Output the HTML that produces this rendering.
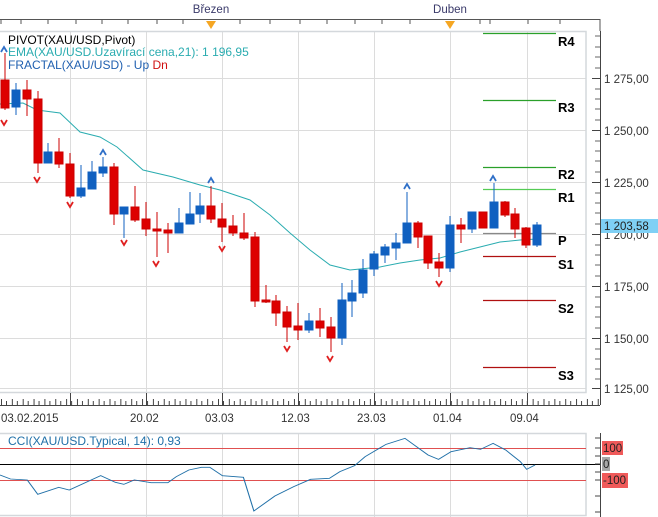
<!DOCTYPE html>
<html><head><meta charset="utf-8"><style>
html,body{margin:0;padding:0;background:#fff;width:658px;height:517px;overflow:hidden}
svg{display:block}
text{font-family:"Liberation Sans",sans-serif}
</style></head><body>
<svg width="658" height="517" viewBox="0 0 658 517" xmlns="http://www.w3.org/2000/svg">
<!-- top axis -->
<text x="211" y="13" font-size="11.5" fill="#3a3a6a" text-anchor="middle">Březen</text>
<text x="450" y="13" font-size="11.5" fill="#3a3a6a" text-anchor="middle">Duben</text>
<line x1="0" y1="19.5" x2="600" y2="19.5" stroke="#555"/>
<g stroke="#555">
<line x1="1" y1="19" x2="1" y2="24"/><line x1="21" y1="19" x2="21" y2="24"/><line x1="48" y1="19" x2="48" y2="24"/><line x1="76" y1="19" x2="76" y2="24"/><line x1="102" y1="19" x2="102" y2="24"/><line x1="128" y1="19" x2="128" y2="24"/><line x1="157" y1="19" x2="157" y2="24"/><line x1="183" y1="19" x2="183" y2="24"/><line x1="240" y1="19" x2="240" y2="24"/><line x1="270" y1="19" x2="270" y2="24"/><line x1="300" y1="19" x2="300" y2="24"/><line x1="327" y1="19" x2="327" y2="24"/><line x1="355" y1="19" x2="355" y2="24"/><line x1="382" y1="19" x2="382" y2="24"/><line x1="410" y1="19" x2="410" y2="24"/><line x1="480" y1="19" x2="480" y2="24"/><line x1="490" y1="19" x2="490" y2="24"/><line x1="528" y1="19" x2="528" y2="24"/><line x1="560" y1="19" x2="560" y2="24"/><line x1="600" y1="19" x2="600" y2="31"/>
</g>
<polygon points="206,21 216,21 211,29" fill="#f5a623"/>
<polygon points="445,21 455,21 450,29" fill="#f5a623"/>
<!-- grid -->
<g stroke="#dcdcdc">
<line x1="0" y1="78.5" x2="586" y2="78.5"/><line x1="0" y1="130.5" x2="586" y2="130.5"/><line x1="0" y1="182.5" x2="586" y2="182.5"/><line x1="0" y1="234.5" x2="586" y2="234.5"/><line x1="0" y1="286.5" x2="586" y2="286.5"/><line x1="0" y1="338.5" x2="586" y2="338.5"/><line x1="0" y1="388.5" x2="586" y2="388.5"/>
<line x1="70.5" y1="31" x2="70.5" y2="392"/><line x1="146.5" y1="31" x2="146.5" y2="392"/><line x1="222.5" y1="31" x2="222.5" y2="392"/><line x1="298.5" y1="31" x2="298.5" y2="392"/><line x1="374.5" y1="31" x2="374.5" y2="392"/><line x1="450.5" y1="31" x2="450.5" y2="392"/><line x1="527.5" y1="31" x2="527.5" y2="392"/>
</g>
<rect x="-1" y="31.5" width="587" height="361" fill="none" stroke="#d4d8dc" stroke-width="1.5"/>
<!-- pivot lines -->
<g stroke-width="1.3">
<line x1="483" y1="33.5" x2="556" y2="33.5" stroke="#2aa02a"/>
<line x1="483" y1="100.5" x2="556" y2="100.5" stroke="#2aa02a"/>
<line x1="483" y1="167.5" x2="556" y2="167.5" stroke="#2aa02a"/>
<line x1="483" y1="189.5" x2="556" y2="189.5" stroke="#55cc55"/>
<line x1="483" y1="233.5" x2="556" y2="233.5" stroke="#888"/>
<line x1="483" y1="256.5" x2="556" y2="256.5" stroke="#b01010"/>
<line x1="483" y1="300.5" x2="556" y2="300.5" stroke="#b01010"/>
<line x1="483" y1="367.5" x2="556" y2="367.5" stroke="#b01010"/>
</g>
<g font-size="13" fill="#000" font-weight="bold">
<text x="558" y="46">R4</text><text x="558" y="112">R3</text><text x="558" y="179">R2</text><text x="558" y="202">R1</text><text x="558" y="245">P</text><text x="558" y="269">S1</text><text x="558" y="313">S2</text><text x="558" y="380">S3</text>
</g>
<!-- EMA -->
<polyline fill="none" stroke="#2aacb0" stroke-width="1" points="0,104 23,103 37,110 60,113 80,132 100,137 117,147 143,170 173,177 200,185 220,190 250,200 270,215 290,233 310,250 330,265 350,270 380,267 400,263 420,260 440,258 460,252 480,247 500,242 520,240 537,239"/>
<!-- candles -->
<g stroke-width="1">
<g stroke="#cc0000" fill="#dd0000">
<line x1="5" y1="53" x2="5" y2="110"/><rect x="1" y="80" width="8" height="28"/>
<line x1="27" y1="80" x2="27" y2="116"/><rect x="23" y="90" width="8" height="9"/>
<line x1="38" y1="91" x2="38" y2="173"/><rect x="34" y="99" width="8" height="64"/>
<line x1="59" y1="138" x2="59" y2="168"/><rect x="55" y="152" width="8" height="12"/>
<line x1="70" y1="153" x2="70" y2="198"/><rect x="66" y="164" width="8" height="32"/>
<line x1="114" y1="163" x2="114" y2="225"/><rect x="110" y="167" width="8" height="47"/>
<line x1="135" y1="186" x2="135" y2="222"/><rect x="131" y="207" width="8" height="13"/>
<line x1="146" y1="202" x2="146" y2="236"/><rect x="142" y="219" width="8" height="10"/>
<line x1="157" y1="212" x2="157" y2="257"/><rect x="153" y="229" width="8" height="2"/>
<line x1="168" y1="223" x2="168" y2="253"/><rect x="164" y="230" width="8" height="3"/>
<line x1="211" y1="186" x2="211" y2="223"/><rect x="207" y="206" width="8" height="13"/>
<line x1="222" y1="203" x2="222" y2="242"/><rect x="218" y="219" width="8" height="8"/>
<line x1="233" y1="215" x2="233" y2="236"/><rect x="229" y="226" width="8" height="7"/>
<line x1="244" y1="213" x2="244" y2="240"/><rect x="240" y="233" width="8" height="5"/>
<line x1="255" y1="232" x2="255" y2="307"/><rect x="251" y="237" width="8" height="64"/>
<line x1="266" y1="285" x2="266" y2="303"/><rect x="262" y="300" width="8" height="2"/>
<line x1="276" y1="295" x2="276" y2="326"/><rect x="272" y="301" width="8" height="12"/>
<line x1="287" y1="306" x2="287" y2="342"/><rect x="283" y="312" width="8" height="15"/>
<line x1="298" y1="303" x2="298" y2="340"/><rect x="294" y="326" width="8" height="4"/>
<line x1="320" y1="308" x2="320" y2="337"/><rect x="316" y="321" width="8" height="7"/>
<line x1="331" y1="317" x2="331" y2="352"/><rect x="327" y="327" width="8" height="11"/>
<line x1="418" y1="221" x2="418" y2="248"/><rect x="414" y="223" width="8" height="14"/>
<line x1="428" y1="236" x2="428" y2="269"/><rect x="424" y="236" width="8" height="27"/>
<line x1="439" y1="253" x2="439" y2="277"/><rect x="435" y="262" width="8" height="6"/>
<line x1="461" y1="218" x2="461" y2="243"/><rect x="457" y="225" width="8" height="4"/>
<rect x="479" y="212" width="8" height="16"/>
<line x1="505" y1="201" x2="505" y2="217"/><rect x="501" y="202" width="8" height="13"/>
<line x1="515" y1="208" x2="515" y2="238"/><rect x="511" y="214" width="8" height="15"/>
<line x1="526" y1="227" x2="526" y2="248"/><rect x="522" y="228" width="8" height="17"/>
</g>
<g stroke="#1060c0" fill="#1060c0">
<line x1="16" y1="83" x2="16" y2="115"/><rect x="12" y="90" width="8" height="17"/>
<line x1="48" y1="143" x2="48" y2="163"/><rect x="44" y="152" width="8" height="11"/>
<line x1="81" y1="165" x2="81" y2="198"/><rect x="77" y="188" width="8" height="8"/>
<line x1="92" y1="161" x2="92" y2="189"/><rect x="88" y="172" width="8" height="17"/>
<line x1="103" y1="157" x2="103" y2="177"/><rect x="99" y="167" width="8" height="6"/>
<line x1="124" y1="207" x2="124" y2="238"/><rect x="120" y="207" width="8" height="7"/>
<line x1="179" y1="208" x2="179" y2="233"/><rect x="175" y="223" width="8" height="10"/>
<line x1="190" y1="192" x2="190" y2="224"/><rect x="186" y="214" width="8" height="10"/>
<line x1="200" y1="193" x2="200" y2="223"/><rect x="196" y="206" width="8" height="8"/>
<line x1="309" y1="313" x2="309" y2="333"/><rect x="305" y="321" width="8" height="9"/>
<line x1="342" y1="283" x2="342" y2="345"/><rect x="338" y="300" width="8" height="38"/>
<line x1="352" y1="280" x2="352" y2="317"/><rect x="348" y="293" width="8" height="8"/>
<line x1="363" y1="259" x2="363" y2="298"/><rect x="359" y="270" width="8" height="23"/>
<line x1="374" y1="251" x2="374" y2="276"/><rect x="370" y="254" width="8" height="15"/>
<line x1="385" y1="244" x2="385" y2="263"/><rect x="381" y="247" width="8" height="8"/>
<line x1="396" y1="233" x2="396" y2="260"/><rect x="392" y="243" width="8" height="5"/>
<line x1="407" y1="192" x2="407" y2="243"/><rect x="403" y="223" width="8" height="20"/>
<line x1="450" y1="216" x2="450" y2="272"/><rect x="446" y="225" width="8" height="43"/>
<line x1="472" y1="212" x2="472" y2="233"/><rect x="468" y="212" width="8" height="17"/>
<line x1="494" y1="183" x2="494" y2="228"/><rect x="490" y="202" width="8" height="26"/>
<line x1="537" y1="222" x2="537" y2="247"/><rect x="533" y="225" width="8" height="20"/>
</g>
</g>
<!-- fractals up -->
<g fill="none" stroke="#3070c8" stroke-width="1.8">
<polyline points="1,52 4,47 7,52"/><polyline points="100,155 103,150 106,155"/><polyline points="208,183 211,178 214,183"/><polyline points="404,189 407,184 410,189"/><polyline points="490,181 493,176 496,181"/>
</g>
<!-- fractals down -->
<g fill="none" stroke="#e02020" stroke-width="1.8">
<polyline points="1,120 4,125 7,120"/><polyline points="34,177 37,182 40,177"/><polyline points="67,202 70,207 73,202"/><polyline points="121,240 124,245 127,240"/><polyline points="153,261 156,266 159,261"/><polyline points="219,246 222,251 225,246"/><polyline points="284,346 287,351 290,346"/><polyline points="327,356 330,361 333,356"/><polyline points="436,281 439,286 442,281"/>
</g>
<!-- legend -->
<text x="8" y="44" font-size="12" fill="#000">PIVOT(XAU/USD,Pivot)</text>
<text x="8" y="56" font-size="12" fill="#2aacb0">EMA(XAU/USD.Uzavírací cena,21): 1 196,95</text>
<text x="8" y="69" font-size="12" fill="#2060b0">FRACTAL(XAU/USD) -  Up  <tspan fill="#d01010">Dn</tspan></text>
<!-- right axis -->
<line x1="600.5" y1="31" x2="600.5" y2="405" stroke="#444"/>
<g stroke="#444">
<line x1="592" y1="78.5" x2="600" y2="78.5"/><line x1="592" y1="130.5" x2="600" y2="130.5"/><line x1="592" y1="182.5" x2="600" y2="182.5"/><line x1="592" y1="234.5" x2="600" y2="234.5"/><line x1="592" y1="286.5" x2="600" y2="286.5"/><line x1="592" y1="338.5" x2="600" y2="338.5"/><line x1="592" y1="388.5" x2="600" y2="388.5"/>
</g>
<g stroke="#666">
<line x1="595" y1="36" x2="600" y2="36"/><line x1="595" y1="47" x2="600" y2="47"/><line x1="595" y1="57" x2="600" y2="57"/><line x1="595" y1="68" x2="600" y2="68"/><line x1="595" y1="89" x2="600" y2="89"/><line x1="595" y1="99" x2="600" y2="99"/><line x1="595" y1="109" x2="600" y2="109"/><line x1="595" y1="120" x2="600" y2="120"/><line x1="595" y1="141" x2="600" y2="141"/><line x1="595" y1="151" x2="600" y2="151"/><line x1="595" y1="161" x2="600" y2="161"/><line x1="595" y1="172" x2="600" y2="172"/><line x1="595" y1="193" x2="600" y2="193"/><line x1="595" y1="203" x2="600" y2="203"/><line x1="595" y1="213" x2="600" y2="213"/><line x1="595" y1="224" x2="600" y2="224"/><line x1="595" y1="245" x2="600" y2="245"/><line x1="595" y1="255" x2="600" y2="255"/><line x1="595" y1="265" x2="600" y2="265"/><line x1="595" y1="276" x2="600" y2="276"/><line x1="595" y1="297" x2="600" y2="297"/><line x1="595" y1="307" x2="600" y2="307"/><line x1="595" y1="317" x2="600" y2="317"/><line x1="595" y1="328" x2="600" y2="328"/><line x1="595" y1="349" x2="600" y2="349"/><line x1="595" y1="359" x2="600" y2="359"/><line x1="595" y1="369" x2="600" y2="369"/><line x1="595" y1="379" x2="600" y2="379"/>
</g>
<g font-size="11.5" fill="#333">
<text x="604" y="83">1 275,00</text><text x="604" y="135">1 250,00</text><text x="604" y="187">1 225,00</text><text x="604" y="239">1 200,00</text><text x="604" y="291">1 175,00</text><text x="604" y="343">1 150,00</text><text x="604" y="393">1 125,00</text>
</g>
<rect x="601" y="219" width="57" height="14" fill="#7fd0f5"/>
<text x="604" y="230" font-size="11.5" fill="#222">1 203,58</text>
<!-- bottom axis -->
<line x1="0" y1="405.5" x2="600" y2="405.5" stroke="#444"/>
<g stroke="#444">
<line x1="70.5" y1="393" x2="70.5" y2="405"/><line x1="146.5" y1="393" x2="146.5" y2="405"/><line x1="222.5" y1="393" x2="222.5" y2="405"/><line x1="298.5" y1="393" x2="298.5" y2="405"/><line x1="374.5" y1="393" x2="374.5" y2="405"/><line x1="450.5" y1="393" x2="450.5" y2="405"/><line x1="527.5" y1="393" x2="527.5" y2="405"/><line x1="600.5" y1="392" x2="600.5" y2="405"/>
</g>
<line x1="1" y1="402" x2="600" y2="402" stroke="#444" stroke-width="6" stroke-dasharray="1 9.85"/>
<line x1="6" y1="403" x2="600" y2="403" stroke="#444" stroke-width="4" stroke-dasharray="1 9.85"/>
<g font-size="11.5" fill="#333">
<text x="1" y="422">03.02.2015</text><text x="130" y="422">20.02</text><text x="205" y="422">03.03</text><text x="281" y="422">12.03</text><text x="357" y="422">23.03</text><text x="433" y="422">01.04</text><text x="510" y="422">09.04</text>
</g>
<!-- CCI panel -->
<g stroke="#dcdcdc">
<line x1="70.5" y1="433" x2="70.5" y2="517"/><line x1="146.5" y1="433" x2="146.5" y2="517"/><line x1="222.5" y1="433" x2="222.5" y2="517"/><line x1="298.5" y1="433" x2="298.5" y2="517"/><line x1="374.5" y1="433" x2="374.5" y2="517"/><line x1="450.5" y1="433" x2="450.5" y2="517"/><line x1="527.5" y1="433" x2="527.5" y2="517"/>
</g>
<rect x="-1" y="433.5" width="587" height="82" fill="none" stroke="#d4d8dc" stroke-width="1.5"/>
<line x1="0" y1="448.5" x2="586" y2="448.5" stroke="#e05050"/>
<line x1="0" y1="464.5" x2="600" y2="464.5" stroke="#000"/>
<line x1="0" y1="480.5" x2="586" y2="480.5" stroke="#e05050"/>
<svg x="0" y="380" width="658" height="137" viewBox="0 0 1568 411" preserveAspectRatio="none" overflow="visible">
<polyline fill="none" stroke="#2070a8" stroke-width="2.6" points="0,285 25,297 65,300 90,343 140,322 165,330 240,287 275,307 295,313 320,300 360,308 400,308 420,290 450,270 480,262 500,262 530,287 580,292 605,393 655,348 700,320 740,298 785,295 810,275 845,257 870,230 920,193 965,175 1020,225 1045,238 1075,215 1120,203 1145,208 1175,190 1205,210 1240,245 1255,268 1275,255"/>
</svg>
<text x="8" y="445" font-size="12" fill="#2070a8">CCI(XAU/USD.Typical, 14): 0,93</text>
<line x1="600.5" y1="433" x2="600.5" y2="517" stroke="#444"/>
<g stroke="#444"><line x1="595" y1="438" x2="600" y2="438"/><line x1="595" y1="448" x2="600" y2="448"/><line x1="595" y1="456" x2="600" y2="456"/><line x1="595" y1="464" x2="600" y2="464"/><line x1="595" y1="472" x2="600" y2="472"/><line x1="595" y1="480" x2="600" y2="480"/><line x1="595" y1="496" x2="600" y2="496"/><line x1="595" y1="512" x2="600" y2="512"/></g>
<rect x="602" y="441" width="21" height="14" fill="#f05a5a"/>
<text x="603" y="452" font-size="11.5" fill="#222">100</text>
<rect x="602" y="457" width="8" height="14" fill="#a8a8a8"/>
<text x="603" y="468" font-size="11.5" fill="#222">0</text>
<rect x="602" y="473" width="26" height="15" fill="#f05a5a"/>
<text x="603" y="484" font-size="11.5" fill="#222">-100</text>
</svg>
</body></html>
